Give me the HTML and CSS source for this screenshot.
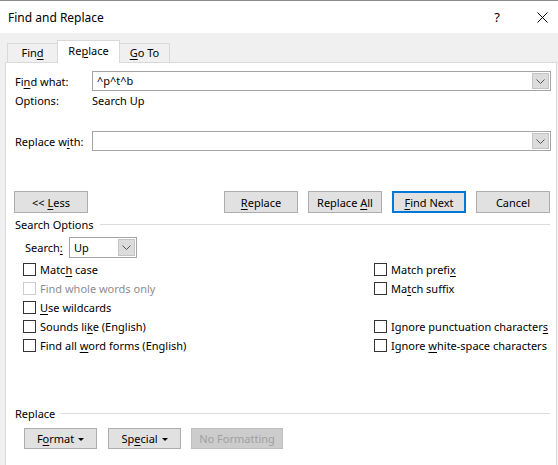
FILE: index.html
```html
<!DOCTYPE html>
<html lang="en">
<head>
  <meta charset="UTF-8">
  <title>Find and Replace</title>
  <link rel="stylesheet" href="styles.css">
</head>
<body>
<div class="titlebar">
  <span class="title">Find and Replace</span>
  <span class="help">?</span>
  <svg class="close" width="11" height="11" viewBox="0 0 11 11"><path d="M0.5 0.5 L10.5 10.5 M10.5 0.5 L0.5 10.5" stroke="#000" stroke-width="1" fill="none"/></svg>
</div>

<div class="client">
  <div class="tabs">
    <div class="tab">Fin<u>d</u></div>
    <div class="tab active">Re<u>p</u>lace</div>
    <div class="tab"><u>G</u>o To</div>
  </div>

  <div class="panel">
    <div class="field-row">
      <label class="field-label">Fi<u>n</u>d what:</label>
      <div class="combo">
        <span class="combo-text">^p^t^b</span>
        <span class="drop"><svg width="9" height="5" viewBox="0 0 9 5"><path d="M0.5 0.5 L4.5 4.5 L8.5 0.5" stroke="#555" fill="none"/></svg></span>
      </div>
    </div>
    <div class="options-row">
      <span class="field-label">Options:</span>
      <span>Search Up</span>
    </div>
    <div class="field-row replace-row">
      <label class="field-label">Replace w<u>i</u>th:</label>
      <div class="combo">
        <span class="combo-text"></span>
        <span class="drop"><svg width="9" height="5" viewBox="0 0 9 5"><path d="M0.5 0.5 L4.5 4.5 L8.5 0.5" stroke="#555" fill="none"/></svg></span>
      </div>
    </div>

    <div class="button-row">
      <button class="btn less">&lt;&lt; <u>L</u>ess</button>
      <div class="button-group">
        <button class="btn"><u>R</u>eplace</button>
        <button class="btn">Replace <u>A</u>ll</button>
        <button class="btn default"><u>F</u>ind Next</button>
        <button class="btn">Cancel</button>
      </div>
    </div>

    <div class="group-title"><span>Search Options</span><div class="rule"></div></div>

    <div class="search-row">
      <span class="search-label">Search<u>:</u></span>
      <div class="combo select">
        <span class="combo-text">Up</span>
        <span class="drop"><svg width="9" height="5" viewBox="0 0 9 5"><path d="M0.5 0.5 L4.5 4.5 L8.5 0.5" stroke="#555" fill="none"/></svg></span>
      </div>
    </div>

    <div class="checks">
      <div class="check"><span class="box"></span><span>Matc<u>h</u> case</span></div>
      <div class="check"><span class="box"></span><span>Match prefi<u>x</u></span></div>
      <div class="check disabled"><span class="box"></span><span>Find whole words only</span></div>
      <div class="check"><span class="box"></span><span>Ma<u>t</u>ch suffix</span></div>
      <div class="check"><span class="box"></span><span><u>U</u>se wildcards</span></div>
      <div class="check"></div>
      <div class="check"><span class="box"></span><span>Sounds li<u>k</u>e (English)</span></div>
      <div class="check"><span class="box"></span><span>Ignore punctuation character<u>s</u></span></div>
      <div class="check"><span class="box"></span><span>Find all <u>w</u>ord forms (English)</span></div>
      <div class="check"><span class="box"></span><span>Ignore <u>w</u>hite-space characters</span></div>
    </div>

    <div class="group-title replace-title"><span>Replace</span><div class="rule"></div></div>

    <div class="format-row">
      <button class="btn small">F<u>o</u>rmat <span class="caret"></span></button>
      <button class="btn small">Sp<u>e</u>cial <span class="caret"></span></button>
      <button class="btn wide" disabled>No Formatting</button>
    </div>
  </div>
</div>
</body>
</html>
```

FILE: styles.css
```css
body {
  margin: 0;
  width: 558px;
  height: 465px;
  overflow: hidden;
  background: #ffffff;
  font-family: "Noto Sans", "Open Sans", sans-serif;
  font-size: 11px;
  color: #000000;
}

u {
  text-decoration-thickness: 1px;
  text-underline-offset: 2px;
}

.titlebar {
  height: 32px;
  border-top: 1px solid #8c8c8c;
  display: flex;
  align-items: center;
  padding: 0 10px 0 8px;
}

.title {
  flex: 1;
  font-size: 12px;
}

.help {
  font-size: 13px;
  margin-right: 37px;
}

.close {
  flex: none;
}

.client {
  background: #f0f0f0;
  height: 425px;
  padding: 7px 1px 0 5px;
}

.tabs {
  display: flex;
  align-items: flex-end;
  height: 22px;
  padding-left: 2px;
}

.tab {
  height: 18px;
  line-height: 17px;
  border: 1px solid #d9d9d9;
  border-bottom: none;
  background: #f0f0f0;
  text-align: center;
  width: 49px;
}

.tab.active {
  width: 61px;
  height: 22px;
  line-height: 20px;
  background: #ffffff;
  margin-bottom: -1px;
  position: relative;
  z-index: 1;
  border-left: none;
  border-right: none;
  box-shadow: -1px 0 0 #d9d9d9, 1px 0 0 #d9d9d9;
}

.panel {
  background: #ffffff;
  border: 1px solid #d9d9d9;
  height: 399px;
  padding: 8px 5px 0 9px;
}

.field-row {
  display: flex;
  align-items: center;
  height: 20px;
}

.field-label {
  width: 77px;
  flex: none;
}

.combo {
  flex: 1;
  height: 18px;
  border: 1px solid #a5a5a5;
  display: flex;
  align-items: center;
  background: #ffffff;
}

.combo-text {
  flex: 1;
  padding-left: 4px;
  line-height: 16px;
}

.drop {
  width: 17px;
  height: 16px;
  margin-right: 1px;
  background: #dcdcdc;
  border: 1px solid #c4c4c4;
  box-sizing: border-box;
  display: flex;
  align-items: center;
  justify-content: center;
}

.options-row {
  display: flex;
  height: 16px;
  line-height: 16px;
  margin-top: 2px;
}

.replace-row {
  margin-top: 22px;
}

.button-row {
  display: flex;
  justify-content: space-between;
  margin-top: 40px;
  padding-right: 1px;
}

.button-group {
  display: flex;
  gap: 10px;
}

.btn {
  width: 74px;
  height: 22px;
  padding: 0;
  font-family: inherit;
  font-size: 11px;
  color: #000000;
  background: #e1e1e1;
  border: 1px solid #adadad;
  border-radius: 0;
}

.btn.less {
  margin-left: -1px;
}

.btn.default {
  border: 2px solid #0078d7;
}

.btn.small {
  width: 73px;
  height: 21px;
}

.btn.wide {
  width: 92px;
  height: 21px;
  background: #cccccc;
  border-color: #bfbfbf;
  color: #a0a0a0;
}

.caret {
  display: inline-block;
  border-left: 3px solid transparent;
  border-right: 3px solid transparent;
  border-top: 3px solid #000000;
  vertical-align: middle;
  margin-left: 1px;
  margin-bottom: 2px;
}

.group-title {
  display: flex;
  align-items: center;
  height: 16px;
  margin-top: 3px;
  padding-right: 1px;
}

.group-title span {
  margin-right: 6px;
}

.rule {
  flex: 1;
  border-top: 1px solid #dcdcdc;
}

.search-row {
  display: flex;
  align-items: center;
  margin-top: 5px;
  padding-left: 10px;
}

.search-label {
  width: 44px;
}

.combo.select {
  flex: none;
  width: 66px;
  height: 19px;
}

.combo.select .drop {
  height: 17px;
}

.checks {
  display: grid;
  grid-template-columns: 351px auto;
  grid-auto-rows: 19px;
  margin-top: 2px;
  padding-left: 8px;
}

.check {
  display: flex;
  align-items: center;
  white-space: nowrap;
}

.box {
  width: 11px;
  height: 11px;
  border: 1px solid #333333;
  margin-right: 4px;
  flex: none;
}

.check.disabled {
  color: #8d8d8d;
}

.check.disabled .box {
  border-color: #cccccc;
}

.replace-title {
  margin-top: 50px;
}

.format-row {
  display: flex;
  gap: 10px;
  margin-top: 7px;
  padding-left: 9px;
}

.format-row .btn + .btn {
  margin-left: 1px;
}

.format-row .btn.wide {
  margin-left: 0;
}
```
